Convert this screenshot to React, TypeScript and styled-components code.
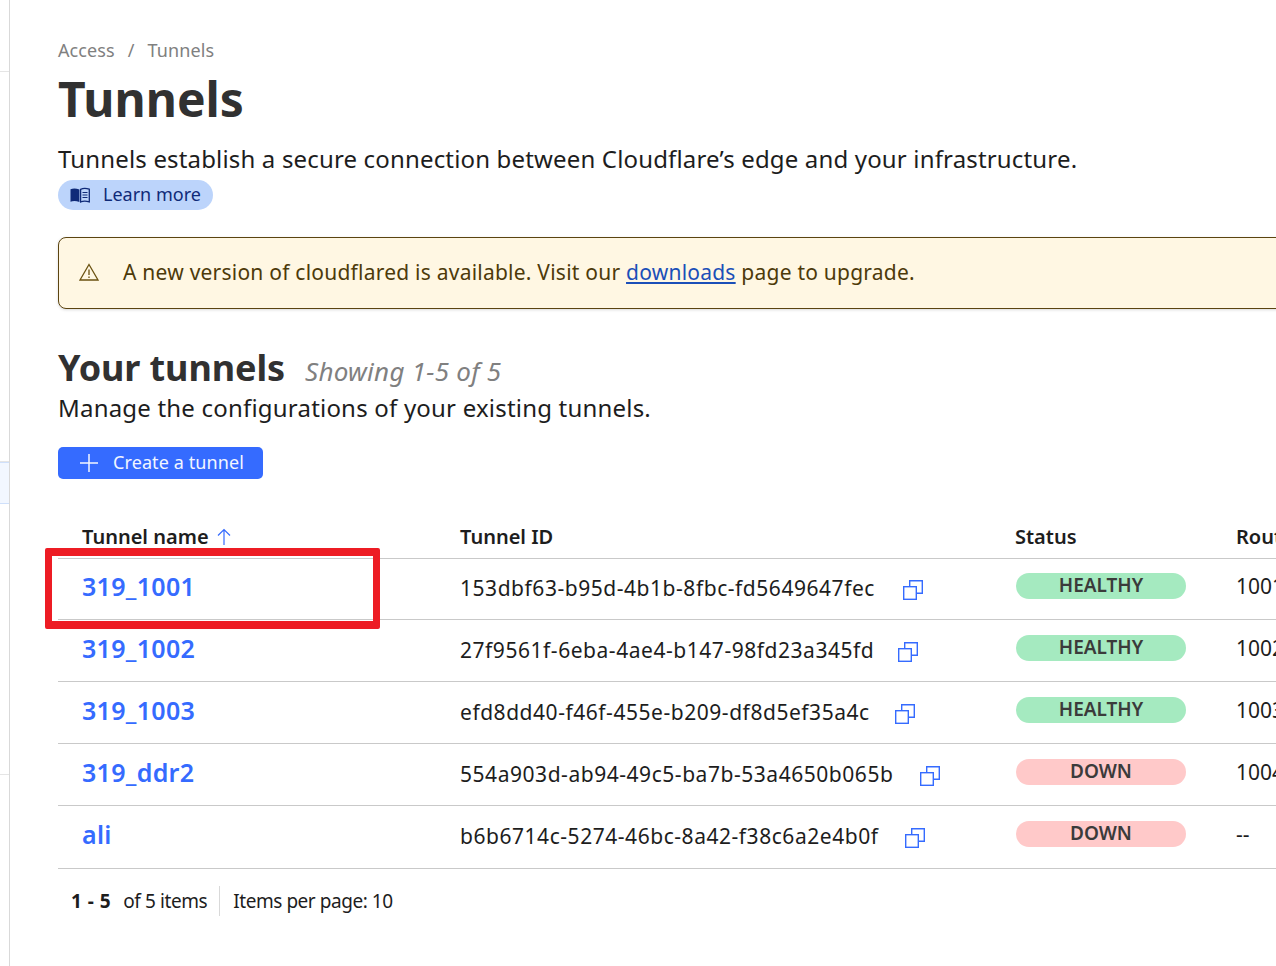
import React from "react";
import styled, { createGlobalStyle } from "styled-components";

const Global = createGlobalStyle`
  html, body { margin: 0; padding: 0; background: #fff; }
  body { font-family: "Noto Sans", "Open Sans", sans-serif; color: #1d1d1d; overflow: hidden; }
  #root { width: 1276px; height: 966px; overflow: hidden; }
`;

const Page = styled.div`
  display: flex;
  width: 1276px;
  height: 966px;
  overflow: hidden;
  position: relative;
`;

const Side = styled.aside`
  flex: 0 0 9px;
  display: flex;
  flex-direction: column;
  border-right: 1px solid #d9d9d9;
`;
const SideItem = styled.div<{ $h: number; $active?: boolean }>`
  height: ${(p) => p.$h}px;
  flex: 0 0 auto;
  background: ${(p) => (p.$active ? "#f2f7ff" : "transparent")};
  border-bottom: 1px solid ${(p) => (p.$active ? "#cfe0fb" : "#e5e5e5")};
  border-top: ${(p) => (p.$active ? "1px solid #cfe0fb" : "none")};
  box-sizing: border-box;
`;

const Main = styled.main`
  flex: 0 0 1400px;
  padding: 38px 0 0 48px;
  box-sizing: border-box;
`;

const Crumbs = styled.nav`
  display: flex;
  gap: 13px;
  font-size: 18px;
  line-height: 24px;
  color: #808080;
  letter-spacing: 0.1px;
`;
const Title = styled.h1`
  margin: 7px 0 0;
  font-size: 48px;
  line-height: 60px;
  font-weight: 700;
  color: #313131;
  letter-spacing: 0;
`;
const Lead = styled.p`
  margin: 14px 0 0;
  font-size: 24px;
  line-height: 32px;
  color: #1d1d1d;
  letter-spacing: 0.16px;
`;
const Pill = styled.a`
  display: inline-flex;
  align-items: center;
  gap: 12px;
  height: 30px;
  width: 155px;
  box-sizing: border-box;
  padding: 0 0 2px 13px;
  margin-top: 5px;
  border-radius: 15px;
  background: #bcd4fb;
  color: #0f2a78;
  font-size: 18px;
  letter-spacing: 0;
  svg { position: relative; top: 1px; left: -1px; }
`;
const Banner = styled.div`
  display: flex;
  align-items: center;
  gap: 24px;
  height: 72px;
  width: 1300px;
  box-sizing: border-box;
  margin-top: 27px;
  padding: 0 0 2px 20px;
  border: 1px solid #5b4410;
  border-radius: 8px;
  background: #fff7e3;
  color: #4d3a0a;
  font-size: 21px;
  letter-spacing: 0.23px;
  box-shadow: 0 1px 3px rgba(0,0,0,.15);
  a { color: #1b4fb8; text-decoration: underline; }
`;
const SectionHead = styled.div`
  display: flex;
  align-items: baseline;
  gap: 20px;
  margin-top: 36px;
`;
const H2 = styled.h2`
  margin: 0;
  font-size: 36px;
  line-height: 46px;
  font-weight: 700;
  color: #313131;
  letter-spacing: -0.1px;
`;
const Showing = styled.span`
  font-size: 26px;
  font-style: italic;
  color: #808080;
  letter-spacing: 0.25px;
`;
const Sub = styled.p`
  margin: 1px 0 0;
  font-size: 24px;
  line-height: 32px;
  letter-spacing: 0.2px;
`;
const Button = styled.button`
  display: flex;
  align-items: center;
  gap: 14px;
  height: 32px;
  width: 205px;
  margin-top: 23px;
  padding: 0 0 2px 21px;
  box-sizing: border-box;
  border: 0;
  border-radius: 5px;
  background: #356bff;
  color: #f2f6ff;
  font-family: inherit;
  font-size: 18px;
  letter-spacing: 0.1px;
  svg { position: relative; top: 1px; }
`;

const Grid = styled.div`
  display: grid;
  grid-template-columns: 402px 555px 221px 1fr;
  width: 1340px;
  align-items: center;
`;
const Head = styled(Grid)`
  height: 40px;
  margin-top: 37px;
  padding-bottom: 2px;
  border-bottom: 1px solid #c9c9c9;
  font-size: 20px;
  font-weight: 600;
  color: #1d1d1d;
  letter-spacing: 0;
`;
const Row = styled(Grid)<{ $h: number; $pad: number }>`
  height: ${(p) => p.$h}px;
  padding-bottom: ${(p) => p.$pad}px;
  box-sizing: border-box;
  border-bottom: 1px solid #c9c9c9;
  font-size: 21px;
`;
const NameHead = styled.div`
  display: flex;
  align-items: center;
  gap: 8px;
  padding-left: 24px;
  svg { position: relative; top: 1px; }
`;
const NameLink = styled.a`
  padding-left: 24px;
  font-size: 25px;
  font-weight: 600;
  color: #356bff;
  letter-spacing: 0.3px;
`;
const IdCell = styled.div`
  display: flex;
  align-items: center;
  white-space: nowrap;
  letter-spacing: 0.54px;
  position: relative;
  top: 2px;
`;
const CopyBtn = styled.span<{ $gap: number }>`
  display: inline-flex;
  margin-left: ${(p) => p.$gap}px;
  position: relative;
  top: 2px;
`;
const Badge = styled.span<{ $ok: boolean }>`
  display: flex;
  align-items: center;
  justify-content: center;
  width: 170px;
  height: 26px;
  margin-left: 1px;
  padding-bottom: 2px;
  box-sizing: border-box;
  border-radius: 13px;
  background: ${(p) => (p.$ok ? "#a5eac0" : "#ffc9c9")};
  color: #3b3b3b;
  font-size: 19px;
  font-weight: 600;
`;
const Pager = styled.div`
  display: flex;
  align-items: center;
  height: 30px;
  margin: 17px 0 0 13px;
  font-size: 19px;
`;
const PagerCount = styled.span`
  display: flex;
  gap: 12px;
  padding-right: 12px;
  border-right: 1px solid #d9d9d9;
  line-height: 30px;
  letter-spacing: -0.4px;
  b { font-weight: 700; letter-spacing: 0.5px; }
`;
const PagerSize = styled.span`
  padding-left: 13px;
  letter-spacing: -0.46px;
`;
const Highlight = styled.div`
  position: absolute;
  left: 45px;
  top: 548px;
  width: 335px;
  height: 81px;
  box-sizing: border-box;
  border-style: solid;
  border-color: #ed1c24;
  border-width: 8px 7px;
  border-radius: 2px;
  pointer-events: none;
`;

const Copy = () => (
  <svg width="20" height="20" viewBox="0 0 20 20" fill="none" stroke="#356bff" strokeWidth="1.4">
    <rect x="0.7" y="6.7" width="12.6" height="12.6" />
    <path d="M6.7 6.5V0.7H19.3V13.3H13.5" />
  </svg>
);

const rows = [
  { name: "319_1001", id: "153dbf63-b95d-4b1b-8fbc-fd5649647fec", ok: true, route: "1001", gap: 28, h: 61, pad: 7 },
  { name: "319_1002", id: "27f9561f-6eba-4ae4-b147-98fd23a345fd", ok: true, route: "1002", gap: 24, h: 62, pad: 6 },
  { name: "319_1003", id: "efd8dd40-f46f-455e-b209-df8d5ef35a4c", ok: true, route: "1003", gap: 25, h: 62, pad: 6 },
  { name: "319_ddr2", id: "554a903d-ab94-49c5-ba7b-53a4650b065b", ok: false, route: "1004", gap: 27, h: 62, pad: 6 },
  { name: "ali", id: "b6b6714c-5274-46bc-8a42-f38c6a2e4b0f", ok: false, route: "--", gap: 27, h: 63, pad: 7 },
];

export default function App() {
  return (
    <Page>
      <Global />
      <Side>
        <SideItem $h={72} />
        <SideItem $h={390} />
        <SideItem $h={42} $active />
        <SideItem $h={271} />
      </Side>
      <Main>
        <Crumbs>
          <span>Access</span>
          <span>/</span>
          <span>Tunnels</span>
        </Crumbs>
        <Title>Tunnels</Title>
        <Lead>Tunnels establish a secure connection between Cloudflare’s edge and your infrastructure.</Lead>
        <Pill>
          <svg width="20" height="16" viewBox="0 0 20 16">
            <path d="M0.5 2.2C3 1.2 6 1.2 9.4 2.4V15C6 13.8 3 13.8.5 14.8Z" fill="#0f2a78" />
            <path d="M10.6 2.4C13 1.2 16 1.2 19.3 2.2V14.8C16 13.8 13 13.8 10.6 15Z" fill="none" stroke="#0f2a78" strokeWidth="1.3" />
            <path d="M12.5 5.5H17.5M12.5 8H17.5M12.5 10.5H17.5" stroke="#0f2a78" strokeWidth="1.1" />
          </svg>
          Learn more
        </Pill>
        <Banner>
          <svg width="20" height="18" viewBox="0 0 20 18" fill="none" stroke="#6b5210" strokeWidth="1.3">
            <path d="M10 1.5L19 17H1Z" />
            <path d="M10 6.5V12M10 13.5V15" />
          </svg>
          <span>
            A new version of cloudflared is available. Visit our <a>downloads</a> page to upgrade.
          </span>
        </Banner>
        <SectionHead>
          <H2>Your tunnels</H2>
          <Showing>Showing 1-5 of 5</Showing>
        </SectionHead>
        <Sub>Manage the configurations of your existing tunnels.</Sub>
        <Button>
          <svg width="20" height="20" viewBox="0 0 20 20" stroke="#f2f6ff" strokeWidth="1.5">
            <path d="M10 1V19M1 10H19" />
          </svg>
          Create a tunnel
        </Button>
        <Head>
          <NameHead>
            Tunnel name
            <svg width="14" height="18" viewBox="0 0 14 18" fill="none" stroke="#356bff" strokeWidth="1.2">
              <path d="M7 1.5V17M1 7.5L7 1.5L13 7.5" />
            </svg>
          </NameHead>
          <div>Tunnel ID</div>
          <div>Status</div>
          <div>Route</div>
        </Head>
        {rows.map((r) => (
          <Row key={r.name} $h={r.h} $pad={r.pad}>
            <NameLink>{r.name}</NameLink>
            <IdCell>
              {r.id}
              <CopyBtn $gap={r.gap}>
                <Copy />
              </CopyBtn>
            </IdCell>
            <div>
              <Badge $ok={r.ok}>{r.ok ? "HEALTHY" : "DOWN"}</Badge>
            </div>
            <span>{r.route}</span>
          </Row>
        ))}
        <Pager>
          <PagerCount>
            <b>1 - 5</b>
            <span>of 5 items</span>
          </PagerCount>
          <PagerSize>Items per page: 10</PagerSize>
        </Pager>
      </Main>
      <Highlight />
    </Page>
  );
}
